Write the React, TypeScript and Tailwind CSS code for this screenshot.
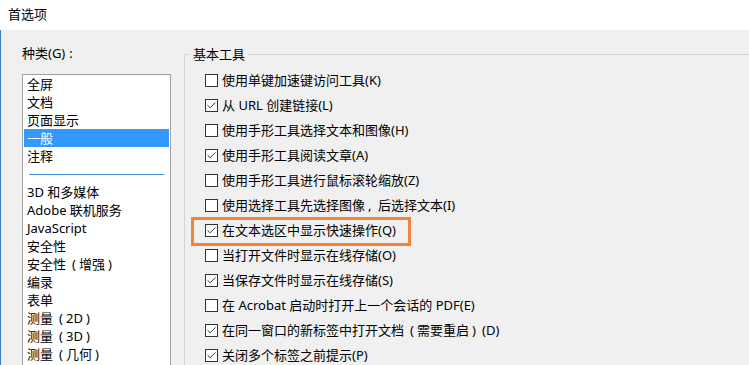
import { Check } from "lucide-react";

const categories = [
  "全屏",
  "文档",
  "页面显示",
  "一般",
  "注释",
  "---",
  "3D 和多媒体",
  "Adobe 联机服务",
  "JavaScript",
  "安全性",
  "安全性（增强）",
  "编录",
  "表单",
  "测量（2D）",
  "测量（3D）",
  "测量（几何）",
];

const options = [
  { label: "使用单键加速键访问工具(K)", checked: false },
  { label: "从 URL 创建链接(L)", checked: true },
  { label: "使用手形工具选择文本和图像(H)", checked: false },
  { label: "使用手形工具阅读文章(A)", checked: true },
  { label: "使用手形工具进行鼠标滚轮缩放(Z)", checked: false },
  { label: "使用选择工具先选择图像，后选择文本(I)", checked: false },
  { label: "在文本选区中显示快速操作(Q)", checked: true, highlight: true },
  { label: "当打开文件时显示在线存储(O)", checked: false },
  { label: "当保存文件时显示在线存储(S)", checked: true },
  { label: "在 Acrobat 启动时打开上一个会话的 PDF(E)", checked: false },
  { label: "在同一窗口的新标签中打开文档（需要重启）(D)", checked: true },
  { label: "关闭多个标签之前提示(P)", checked: true },
];

// fullwidth punctuation: keep a full-em cell like the Windows UI font does
function Txt({ text }: { text: string }) {
  const parts = text.split(/([（）：，])/);
  return (
    <>
      {parts.map((p, i) => {
        if (p === "（") return <span key={i} className="inline-block w-[13px] text-right pr-[3px]">(</span>;
        if (p === "）") return <span key={i} className="inline-block w-[13px] pl-[3px]">)</span>;
        if (p === "：") return <span key={i} className="inline-block w-[13px] pl-[4px]">:</span>;
        if (p === "，") return <span key={i} className="inline-block w-[13px] pl-[3px]">,</span>;
        return p;
      })}
    </>
  );
}

function CheckBox({ checked }: { checked: boolean }) {
  return (
    <span className="w-[13px] h-[13px] border border-[#333] bg-white flex items-center justify-center shrink-0">
      {checked && <Check className="w-[11px] h-[11px] text-[#222]" strokeWidth={2} />}
    </span>
  );
}

export default function App() {
  return (
    <div
      lang="zh-CN"
      className="w-[749px] h-[365px] overflow-hidden bg-[#f0f0f0] text-[13px] text-black"
      style={{ fontFamily: '"Noto Sans", "Noto Sans CJK SC", sans-serif' }}
    >
      <div className="h-[30px] bg-white flex items-center pl-[8px]">首选项</div>

      <div className="flex h-[335px] border-l border-[#3a7fd0]">
        <div className="w-[161px] shrink-0 pl-[21px] pt-[14px]">
          <div className="h-[18px] leading-[18px]">
            <Txt text="种类(G)：" />
          </div>
          <div className="mt-[12px] w-[149px] h-[300px] bg-white border border-[#a0a0a0] px-px">
            {categories.map((c, i) =>
              c === "---" ? (
                <div key={i} className="h-[18px] flex items-center px-[5px]">
                  <div className="h-px w-full bg-[#3c8fd8]" />
                </div>
              ) : (
                <div
                  key={i}
                  className={
                    "h-[18px] leading-[18px] pl-[3px] whitespace-nowrap " +
                    (c === "一般" ? "bg-[#3399ff] text-white" : "")
                  }
                >
                  <Txt text={c} />
                </div>
              )
            )}
          </div>
        </div>

        <fieldset className="mt-[16px] ml-[22px] flex-1 border-l border-t border-[#d4d4d4]">
          <legend className="ml-[5px] px-[3px] leading-[16px]">基本工具</legend>
          <div className="pl-[20px] pt-[6px]">
            {options.map((o, i) => (
              <div key={i} className="relative h-[25px] flex items-center gap-[4px] whitespace-nowrap">
                {o.highlight && (
                  <span className="absolute left-[-14px] top-[-1px] w-[220px] h-[29px] border-[3px] border-[#f0843a]" />
                )}
                <CheckBox checked={o.checked} />
                <span>
                  <Txt text={o.label} />
                </span>
              </div>
            ))}
          </div>
        </fieldset>
      </div>
    </div>
  );
}
